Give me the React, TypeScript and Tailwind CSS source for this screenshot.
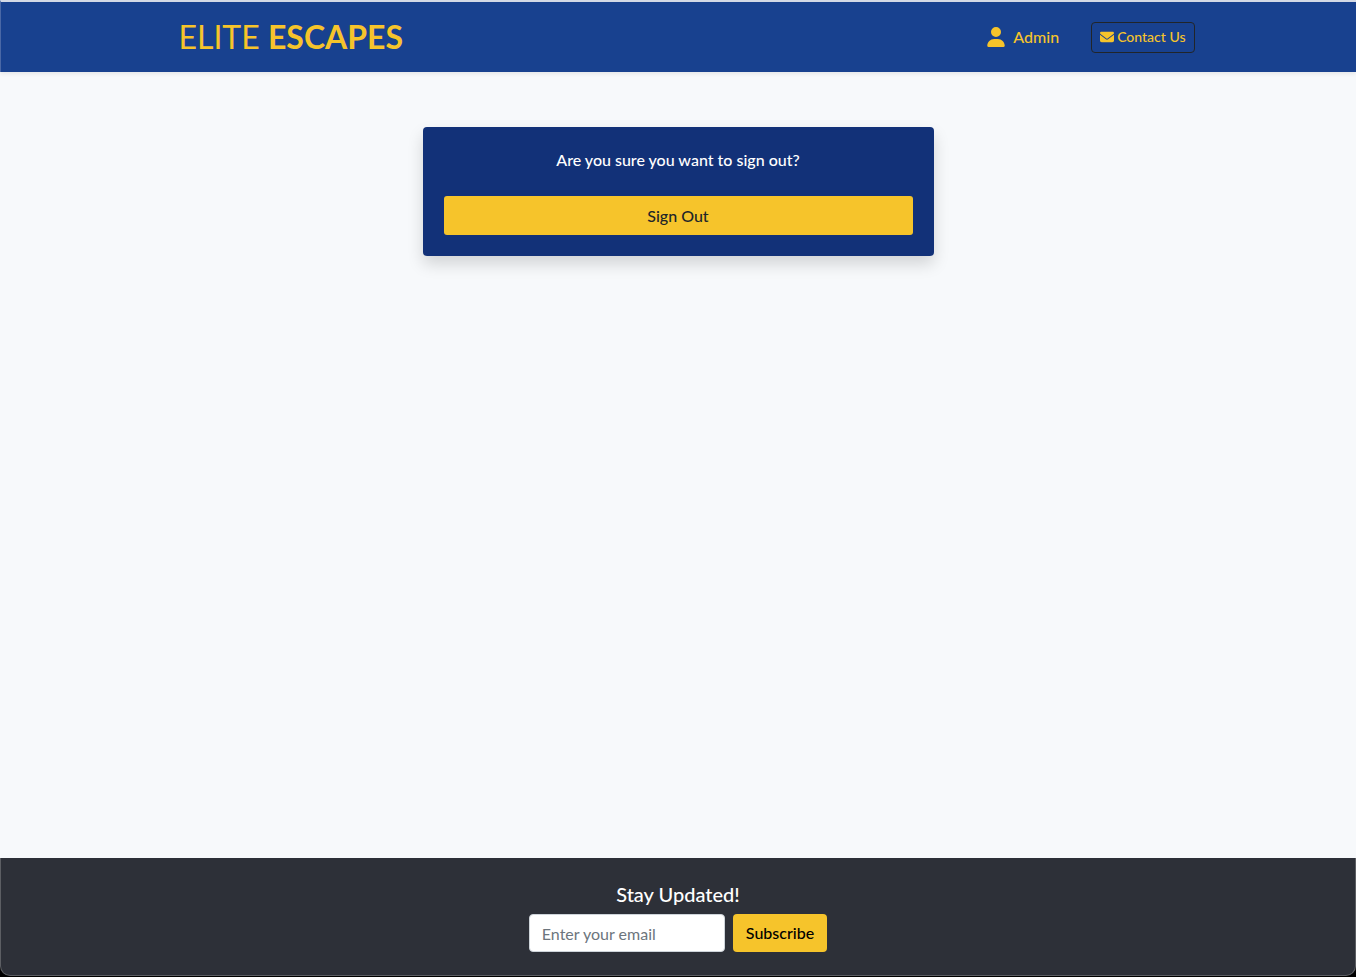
import React from "react";
import { FaUser, FaEnvelope } from "react-icons/fa6";

function Header() {
  return (
    <header className="border-t-2 border-l border-t-[#d3d9e6] border-l-[#4a68a6] bg-[#18418f] shadow-[0_2px_4px_rgba(0,0,0,0.075)]">
      <div className="mx-auto flex h-[70px] w-full max-w-[1032px] items-center justify-between pl-4">
        <a href="#" className="text-[32px] leading-none text-[#f6c42b]">
          ELITE <strong className="font-bold">ESCAPES</strong>
        </a>
        <nav className="flex items-center gap-8 text-[#f6c42b]">
          <a href="#" className="flex items-center gap-2 text-base font-medium">
            <FaUser className="h-5 w-[18px]" />
            Admin
          </a>
          <a href="#" className="flex h-[31px] items-center gap-[3px] rounded-sm border border-[#212529] px-2 text-sm font-medium">
            <FaEnvelope className="size-3.5" />
            Contact Us
          </a>
        </nav>
      </div>
    </header>
  );
}

function SignOutCard() {
  return (
    <section className="w-full max-w-[511px] rounded bg-[#123178] p-[21px] text-center shadow-[0_8px_16px_rgba(0,0,0,0.15)]">
      <p className="mb-6 text-base font-medium text-white">Are you sure you want to sign out?</p>
      <button type="button" className="h-[39px] w-full rounded-[3px] bg-[#f6c42b] text-base font-medium text-[#212529]">
        Sign Out
      </button>
    </section>
  );
}

function Footer() {
  return (
    <footer className="bg-black pb-px">
      <div className="flex h-[118px] flex-col items-center rounded-b-[10px] border-x border-b border-[#5c5e63] bg-[#2d3038] pt-6">
        <h2 className="mb-2 text-xl leading-6 font-medium text-white">Stay Updated!</h2>
        <form className="flex gap-2">
          <input
            type="email"
            aria-label="Email address"
            placeholder="Enter your email"
            className="h-[38px] w-[196px] rounded border border-[#ced4da] bg-white px-3 text-base placeholder:text-[#6c757d]"
          />
          <button type="button" className="h-[38px] rounded bg-[#f6c42b] px-[13px] text-base font-medium text-black">
            Subscribe
          </button>
        </form>
      </div>
    </footer>
  );
}

export default function App() {
  return (
    <div className="flex min-h-screen flex-col bg-[#f7f9fb] font-['Lato',sans-serif]">
      <Header />
      <main className="flex grow flex-col items-center pt-[55px]">
        <SignOutCard />
      </main>
      <Footer />
    </div>
  );
}
